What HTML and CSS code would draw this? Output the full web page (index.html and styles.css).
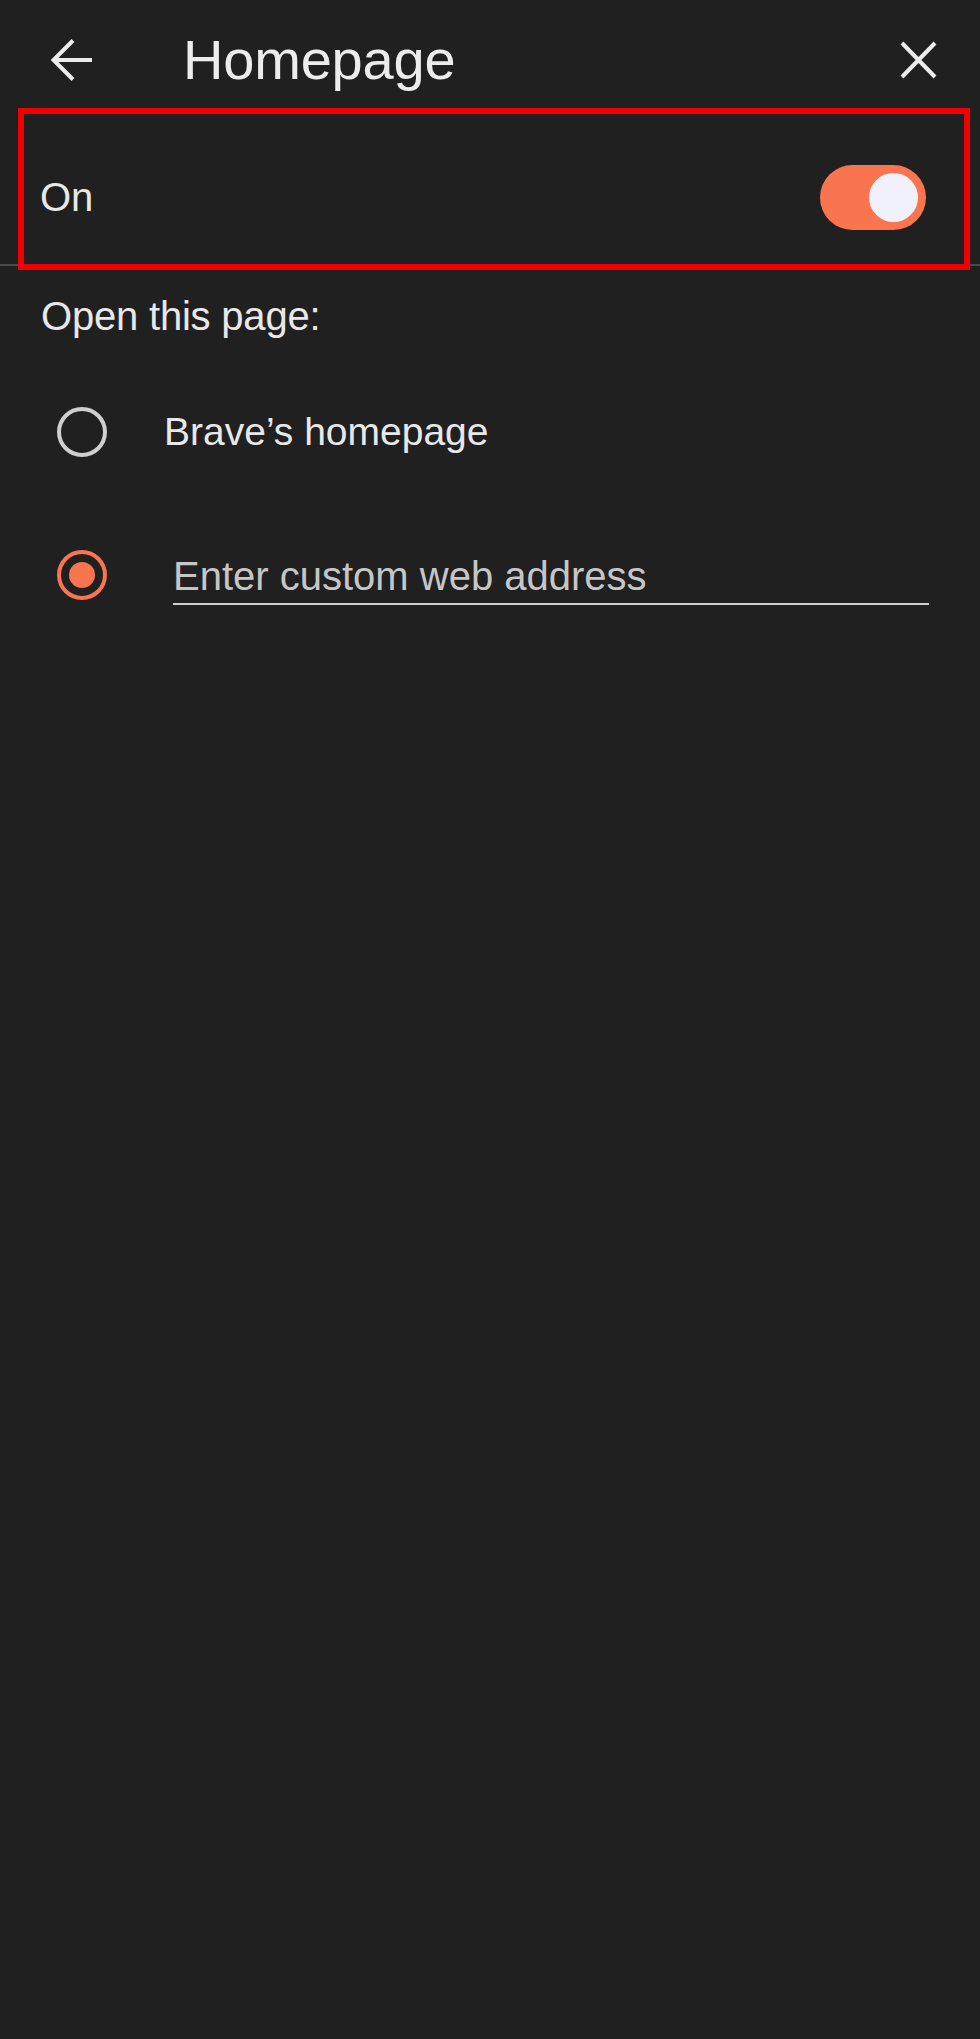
FILE: index.html
```html
<!DOCTYPE html>
<html lang="en">
<head>
<meta charset="utf-8">
<title>Homepage</title>
<link rel="stylesheet" href="styles.css">
</head>
<body>
<div class="page">
  <header class="topbar">
    <svg class="icon back" width="48" height="48" viewBox="0 0 48 48" aria-hidden="true">
      <path d="M44 24H6M25 4.5L5.5 24L25 43.5" fill="none" stroke="#ececec" stroke-width="4" stroke-linejoin="miter"/>
    </svg>
    <h1 class="title">Homepage</h1>
    <svg class="icon close" width="48" height="48" viewBox="0 0 48 48" aria-hidden="true">
      <path d="M8 7L41 41M41 7L8 41" fill="none" stroke="#ececec" stroke-width="4"/>
    </svg>
  </header>

  <div class="switch-row">
    <span class="switch-label">On</span>
    <span class="toggle"><span class="thumb"></span></span>
  </div>

  <section class="content">
    <div class="section-label">Open this page:</div>
    <div class="options">
      <div class="option">
        <span class="radio"></span>
        <span class="option-text">Brave’s homepage</span>
      </div>
      <div class="option">
        <span class="radio checked"><span class="dot"></span></span>
        <span class="address">Enter custom web address</span>
      </div>
    </div>
  </section>

  <div class="highlight"></div>
</div>
</body>
</html>
```

FILE: styles.css
```css
html, body {
  margin: 0;
  padding: 0;
  background: #202020;
}

body {
  font-family: "Liberation Sans", Arial, sans-serif;
  color: #e8e8e8;
}

.page {
  position: relative;
  width: 980px;
  min-height: 2039px;
  background: #202020;
}

.topbar {
  display: flex;
  align-items: center;
  height: 120px;
  padding: 0 38px 0 48px;
  box-sizing: border-box;
}

.icon {
  display: block;
  flex: none;
}

.title {
  margin: 0 0 0 87px;
  flex: 1;
  font-size: 56px;
  font-weight: 400;
  color: #ececec;
  line-height: 60px;
  letter-spacing: -0.2px;
}

.switch-row {
  display: flex;
  align-items: center;
  justify-content: space-between;
  height: 146px;
  padding: 10px 54px 0 40px;
  box-sizing: border-box;
  border-bottom: 2px solid #4a4a4a;
}

.switch-label {
  font-size: 40px;
  line-height: 48px;
  color: #e8e8e8;
}

.toggle {
  display: flex;
  align-items: center;
  justify-content: flex-end;
  width: 106px;
  height: 65px;
  padding: 0 8px;
  box-sizing: border-box;
  border-radius: 33px;
  background: #f8754f;
}

.thumb {
  width: 49px;
  height: 49px;
  border-radius: 50%;
  background: #f1f1fb;
}

.content {
  padding: 26px 0 0 41px;
}

.section-label {
  font-size: 40px;
  line-height: 48px;
  color: #e8e8e8;
  letter-spacing: -0.2px;
}

.options {
  margin-top: 20px;
  padding-left: 16px;
}

.option {
  display: flex;
  align-items: center;
  height: 143px;
}

.radio {
  display: flex;
  align-items: center;
  justify-content: center;
  flex: none;
  width: 50px;
  height: 50px;
  box-sizing: border-box;
  border: 4px solid #cfcfcf;
  border-radius: 50%;
}

.radio.checked {
  border-color: #f8754f;
}

.dot {
  width: 26px;
  height: 26px;
  border-radius: 50%;
  background: #f8754f;
}

.option-text {
  margin-left: 57px;
  font-size: 39px;
  line-height: 48px;
  color: #e8e8e8;
}

.address {
  margin-left: 66px;
  width: 756px;
  padding-top: 13px;
  box-sizing: border-box;
  height: 66px;
  margin-top: -6px;
  font-size: 40px;
  line-height: 48px;
  color: #c6c6c6;
  border-bottom: 2px solid #cfcfcf;
}

.highlight {
  position: absolute;
  left: 18px;
  top: 108px;
  width: 952px;
  height: 162px;
  box-sizing: border-box;
  border: 6px solid #f00000;
  pointer-events: none;
}
```
